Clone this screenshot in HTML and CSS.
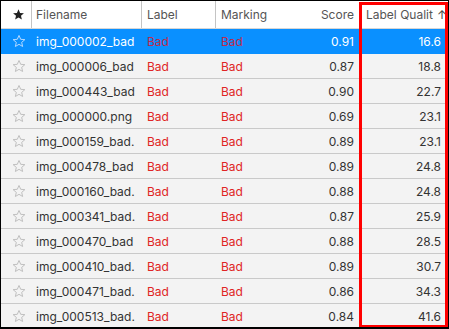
FILE: index.html
```html
<!DOCTYPE html>
<html>
<head>
<meta charset="utf-8">
<link rel="stylesheet" href="styles.css">
</head>
<body>
<div class="frame">
  <div class="row head">
    <div class="cell star"><svg viewBox="0 0 24 24" class="ico filled"><path d="M12 2.5l2.9 6.6 7.1.6-5.4 4.7 1.6 7-6.2-3.7-6.2 3.7 1.6-7L2 9.7l7.1-.6z"/></svg></div>
    <div class="cell name">Filename</div>
    <div class="cell label">Label</div>
    <div class="cell mark">Marking</div>
    <div class="cell score num">Score</div>
    <div class="cell qual"><span class="qt">Label Qualit</span><span class="arrow">↑</span></div>
  </div>
  <div class="body" id="body"></div>
  <div class="highlight"></div>
</div>
<script src="app.js"></script>
</body>
</html>
```

FILE: styles.css
```css
* { box-sizing: border-box; }
html, body { margin: 0; padding: 0; }
body {
  width: 449px;
  height: 329px;
  overflow: hidden;
  background: #fff;
  font-family: Inter, "Noto Sans", sans-serif;
  font-size: 12px;
}
.frame {
  position: relative;
  width: 449px;
  height: 329px;
  border: 1px solid #000;
  border-bottom-width: 2px;
  overflow: hidden;
  background: #f3f3f3;
}
.row {
  display: grid;
  grid-template-columns: 31px 110px 74px 96px 47px 89px;
  height: 25px;
  border-bottom: 1px solid #c9c9c9;
  background: #f3f3f3;
  color: #333;
}
.row.head {
  height: 28px;
  background: #fff;
  color: #555;
  border-bottom: 1px solid #d6d6d6;
}
.row.sel {
  background: #0a90ff;
  border-bottom-color: #0a90ff;
  color: #fff;
}
.cell {
  display: flex;
  align-items: center;
  padding: 0 5px;
  white-space: nowrap;
  overflow: hidden;
}
.head .cell { border-right: 1px solid #c4c4c4; }
.head .cell.mark, .head .cell.score, .head .cell.qual { border-right: none; }
.cell.star { justify-content: center; padding: 0 0 0 4px; }
.cell.name { padding-left: 4px; }
.cell.num { justify-content: flex-end; }
.cell.qual { justify-content: flex-end; padding-right: 7px; }
.head .cell.qual { justify-content: flex-start; padding-left: 7px; padding-right: 0; overflow: visible; }
.arrow { margin-left: 4px; color: #444; }
.bad { color: #e02424; }
.sel .bad { color: #c02a4c; }
.ico { width: 14px; height: 14px; }
.head .ico { width: 13px; height: 13px; }
.ico.filled path { fill: #222; }
.ico.outline path { fill: none; stroke: #b8b8b8; stroke-width: 1.5; stroke-linejoin: round; }
.sel .ico.outline path { stroke: #cfe3ff; }
.highlight {
  position: absolute;
  left: 358px;
  top: 1px;
  width: 89px;
  height: 326px;
  border: 3px solid #f00;
  pointer-events: none;
}
```

FILE: app.js
```js
const data = [
  ["img_000002_bad", "0.91", "16.6"],
  ["img_000006_bad", "0.87", "18.8"],
  ["img_000443_bad", "0.90", "22.7"],
  ["img_000000.png", "0.69", "23.1"],
  ["img_000159_bad.", "0.89", "23.1"],
  ["img_000478_bad", "0.89", "24.8"],
  ["img_000160_bad.", "0.88", "24.8"],
  ["img_000341_bad.", "0.87", "25.9"],
  ["img_000470_bad", "0.88", "28.5"],
  ["img_000410_bad.", "0.89", "30.7"],
  ["img_000471_bad.", "0.86", "34.3"],
  ["img_000513_bad.", "0.84", "41.6"]
];
const star = '<svg viewBox="0 0 24 24" class="ico outline"><path d="M12 2.5l2.9 6.6 7.1.6-5.4 4.7 1.6 7-6.2-3.7-6.2 3.7 1.6-7L2 9.7l7.1-.6z"/></svg>';
const body = document.getElementById("body");
data.forEach((d, i) => {
  const r = document.createElement("div");
  r.className = "row" + (i === 0 ? " sel" : "");
  r.innerHTML =
    '<div class="cell star">' + star + '</div>' +
    '<div class="cell name">' + d[0] + '</div>' +
    '<div class="cell label bad">Bad</div>' +
    '<div class="cell mark bad">Bad</div>' +
    '<div class="cell score num">' + d[1] + '</div>' +
    '<div class="cell qual">' + d[2] + '</div>';
  body.appendChild(r);
});
```
